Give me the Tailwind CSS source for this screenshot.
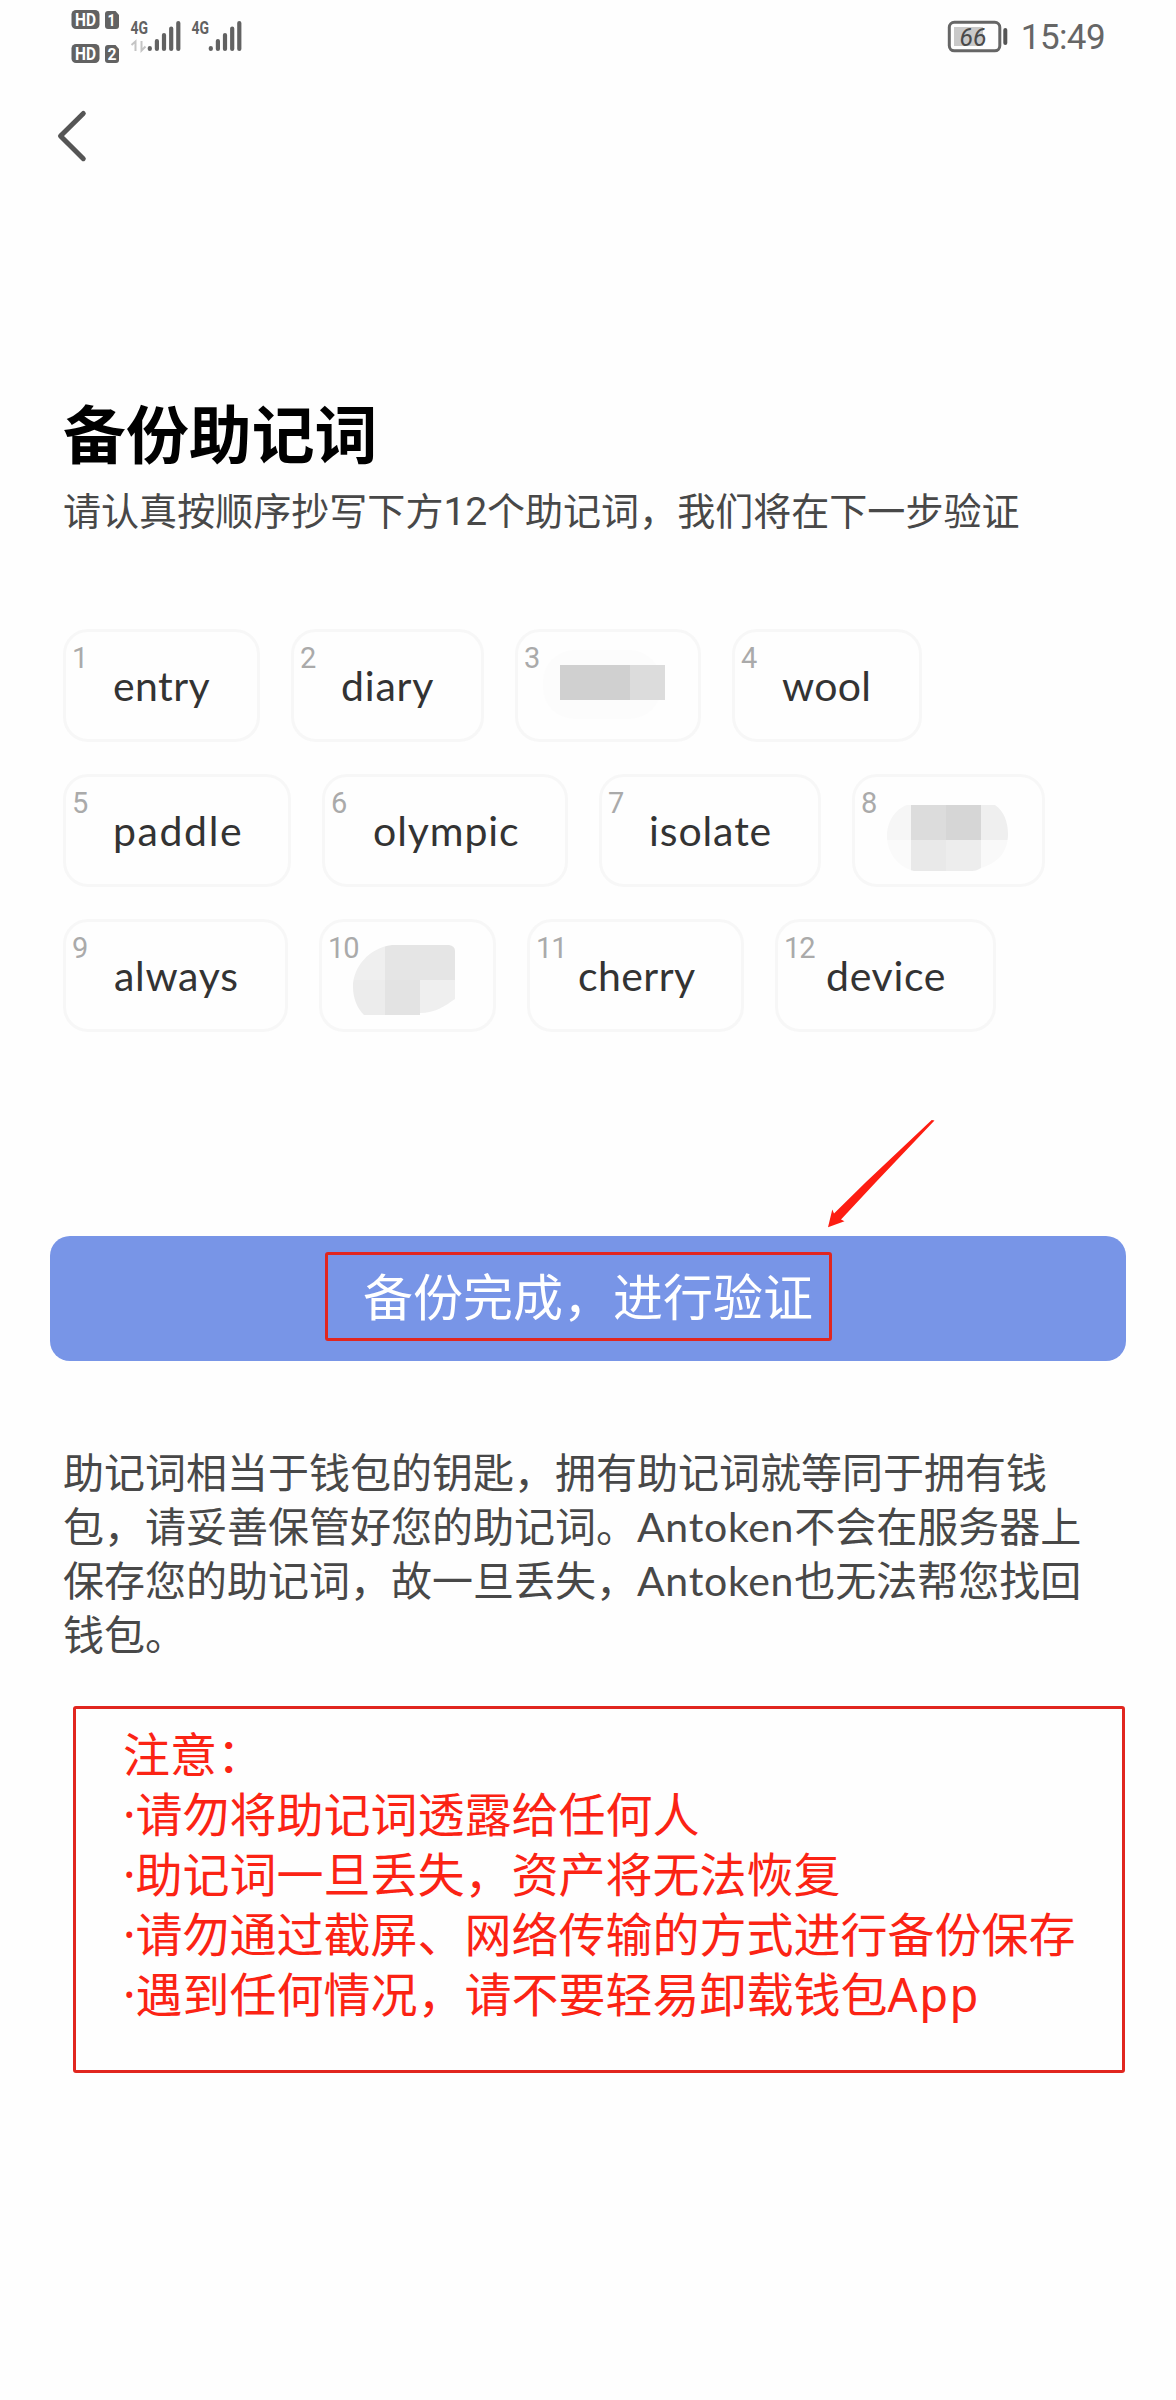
<!DOCTYPE html>
<html lang="zh-CN">
<head>
<meta charset="utf-8">
<title>备份助记词</title>
<script src="https://cdn.jsdelivr.net/npm/@tailwindcss/browser@4"></script>
</head>
<body class="bg-[#fefefe]">
<div class="relative flex h-[2400px] w-[1176px] flex-col overflow-hidden bg-[#fefefe] font-['Lato','Noto_Sans_CJK_SC',sans-serif] text-[#484848]">

  <!-- Status bar -->
  <header class="flex h-[72px] shrink-0 items-start justify-between pl-[71px] pr-[71px]">
    <svg class="mt-2" width="172" height="58" viewBox="71 8 172 58" fill="#626262" font-family="Roboto, sans-serif" font-weight="700">
      <rect x="71.500" y="10" width="28" height="19" rx="4.500"/>
      <rect x="71.500" y="44" width="28" height="19" rx="4.500"/>
      <path d="M108 11h7.500l3.500 4v11a3 3 0 0 1-3 3h-8a3 3 0 0 1-3-3V14a3 3 0 0 1 3-3z"/>
      <path d="M108 45h7.500l3.500 4v11a3 3 0 0 1-3 3h-8a3 3 0 0 1-3-3V48a3 3 0 0 1 3-3z"/>
      <g fill="#fff" font-size="18">
        <text x="75" y="26" textLength="21" lengthAdjust="spacingAndGlyphs">HD</text>
        <text x="75" y="60" textLength="21" lengthAdjust="spacingAndGlyphs">HD</text>
        <text x="107.500" y="26" font-size="17" textLength="8" lengthAdjust="spacingAndGlyphs">1</text>
        <text x="107.500" y="60" font-size="17" textLength="9" lengthAdjust="spacingAndGlyphs">2</text>
      </g>
      <g font-size="19">
        <text x="130.500" y="34" textLength="17.500" lengthAdjust="spacingAndGlyphs">4G</text>
        <text x="191.500" y="34" textLength="17.500" lengthAdjust="spacingAndGlyphs">4G</text>
      </g>
      <g fill="none" stroke="#c4c4c4" stroke-width="2">
        <path d="M131.500 45l4-3.500V51M141.500 41v9.500l4-4"/>
      </g>
      <g fill="none" stroke="#626262" stroke-width="4.200" stroke-linecap="round">
        <path d="M149.800 48v1M156.900 41v8M164 35v14M171.200 28.500v20.500M178.300 23v26"/>
        <path d="M210.800 48v1M217.900 41v8M225 35v14M232.200 28.500v20.500M239.300 23v26"/>
      </g>
    </svg>
    <div class="flex items-start gap-3 pt-5">
      <svg width="62" height="34" viewBox="948 20 62 34">
        <rect x="955" y="27" width="29" height="19" fill="#c9c9c9"/>
        <rect x="950.300" y="22.300" width="50.500" height="28.500" rx="5" fill="none" stroke="#666" stroke-width="3"/>
        <path d="M1006.300 30v13" stroke="#555" stroke-width="4" stroke-linecap="round"/>
        <text x="960.500" y="45.500" font-family="Roboto, sans-serif" font-size="25.500" font-style="italic" fill="#4a4a4a" textLength="27" lengthAdjust="spacingAndGlyphs">66</text>
      </svg>
      <span class="-mt-[4px] font-['Roboto'] text-[35px] leading-[44px] tracking-[-0.600px] text-[#666]">15:49</span>
    </div>
  </header>

  <!-- Back -->
  <nav class="flex h-[308px] shrink-0 pl-[56px] pt-[36px]">
    <svg width="32" height="56" viewBox="56 108 32 56" fill="none" stroke="#555" stroke-width="5" stroke-linecap="round" stroke-linejoin="round"><path d="M83.300 113.500L60.500 136l22.800 22.700"/></svg>
  </nav>

  <main class="flex flex-col">
    <h1 class="ml-[63px] mt-[13px] whitespace-nowrap text-[62.900px] font-bold leading-[82px] text-black">备份助记词</h1>
    <p class="ml-[63px] mt-[10px] whitespace-nowrap text-[38.050px] leading-[50px]">请认真按顺序抄写下方<span class="font-['Roboto'] text-[39px] tracking-[-0.200px]">12</span>个助记词，我们将在下一步验证</p>

    <!-- Mnemonic words -->
    <section class="ml-[63px] mt-[92px] flex flex-col gap-[32px] text-[41px] leading-[50px] text-[#333]">
      <div class="flex gap-[31px]">
        <div class="relative flex h-[113px] w-[197px] items-center rounded-[25px] border-3 border-[#f7f7f7] pl-[47px]"><i class="absolute left-[6px] top-[8px] font-['Roboto'] text-[29px] leading-[36px] not-italic text-[#aaa]">1</i><span class="tracking-[0.400px]">entry</span></div>
        <div class="relative flex h-[113px] w-[193px] items-center rounded-[25px] border-3 border-[#f7f7f7] pl-[47px]"><i class="absolute left-[6px] top-[8px] font-['Roboto'] text-[29px] leading-[36px] not-italic text-[#aaa]">2</i><span class="tracking-[0.800px]">diary</span></div>
        <div class="relative flex h-[113px] w-[186px] items-start rounded-[25px] border-3 border-[#f7f7f7] pl-[25px] pt-[18px]"><i class="absolute left-[6px] top-[8px] font-['Roboto'] text-[29px] leading-[36px] not-italic text-[#aaa]">3</i>
          <svg class="shrink-0" width="123" height="70" viewBox="543 650 123 70"><rect x="543" y="650" width="118" height="69" rx="32" fill="#fcfcfc"/><path fill="#d0d0d0" d="M560 665h70v35h-70z"/><path fill="#dcdcdc" d="M630 665h35v35h-35z"/></svg></div>
        <div class="relative flex h-[113px] w-[190px] items-center rounded-[25px] border-3 border-[#f7f7f7] pl-[47px]"><i class="absolute left-[6px] top-[8px] font-['Roboto'] text-[29px] leading-[36px] not-italic text-[#aaa]">4</i><span class="tracking-[0.300px]">wool</span></div>
      </div>
      <div class="flex gap-[31px]">
        <div class="relative flex h-[113px] w-[228px] items-center rounded-[25px] border-3 border-[#f7f7f7] pl-[47px]"><i class="absolute left-[6px] top-[8px] font-['Roboto'] text-[29px] leading-[36px] not-italic text-[#aaa]">5</i><span class="tracking-[1.600px]">paddle</span></div>
        <div class="relative flex h-[113px] w-[246px] items-center rounded-[25px] border-3 border-[#f7f7f7] pl-[48px]"><i class="absolute left-[6px] top-[8px] font-['Roboto'] text-[29px] leading-[36px] not-italic text-[#aaa]">6</i><span class="tracking-[0.900px]">olympic</span></div>
        <div class="relative flex h-[113px] w-[222px] items-center rounded-[25px] border-3 border-[#f7f7f7] pl-[47px]"><i class="absolute left-[6px] top-[8px] font-['Roboto'] text-[29px] leading-[36px] not-italic text-[#aaa]">7</i><span class="tracking-[0.900px]">isolate</span></div>
        <div class="relative flex h-[113px] w-[193px] items-start rounded-[25px] border-3 border-[#f7f7f7] pl-[32px] pt-[28px]"><i class="absolute left-[6px] top-[8px] font-['Roboto'] text-[29px] leading-[36px] not-italic text-[#aaa]">8</i>
          <svg width="121" height="66" viewBox="886 805 121 66"><defs><clipPath id="m8"><path d="M906 805h88c9 6 13 17 13 29 0 18-10 29-27 34-3 2-6 3-9 3h-58c-16-4-27-18-27-35 0-14 8-27 20-31z"/></clipPath></defs><g clip-path="url(#m8)"><path fill="#f6f6f6" d="M886 805h24v35h-24z"/><path fill="#dcdcdc" d="M910 805h36v35h-36z"/><path fill="#d6d6d6" d="M945 805h35v35h-35z"/><path fill="#efefef" d="M980 805h27v35h-27z"/><path fill="#fafafa" d="M886 840h24v31h-24z"/><path fill="#e9e9e9" d="M910 840h36v31h-36z"/><path fill="#ededed" d="M945 840h35v31h-35z"/><path fill="#f9f9f9" d="M980 840h27v31h-27z"/></g></svg></div>
      </div>
      <div class="flex gap-[31px]">
        <div class="relative flex h-[113px] w-[225px] items-center rounded-[25px] border-3 border-[#f7f7f7] pl-[48px]"><i class="absolute left-[6px] top-[8px] font-['Roboto'] text-[29px] leading-[36px] not-italic text-[#aaa]">9</i><span class="tracking-[0.700px]">always</span></div>
        <div class="relative flex h-[113px] w-[177px] items-start rounded-[25px] border-3 border-[#f7f7f7] pl-[31px] pt-[23px]"><i class="absolute left-[6px] top-[8px] font-['Roboto'] text-[29px] leading-[36px] tracking-[-1px] not-italic text-[#aaa]">10</i>
          <svg width="102" height="70" viewBox="353 945 102 70"><defs><clipPath id="m10"><path d="M392 945h57q6 1 6 6v48c-10 7-20 14-35 14v2h-56c-7-7-11-17-11-28 0-20 16-39 39-42z"/></clipPath></defs><g clip-path="url(#m10)"><path fill="#efefef" d="M353 945h32v35h-32z"/><path fill="#e5e5e5" d="M385 945h70v35h-70z"/><path fill="#ececec" d="M353 980h32v35h-32z"/><path fill="#e3e3e3" d="M385 980h35v35h-35z"/><path fill="#efefef" d="M420 980h35v35h-35z"/></g></svg></div>
        <div class="relative flex h-[113px] w-[217px] items-center rounded-[25px] border-3 border-[#f7f7f7] pl-[48px]"><i class="absolute left-[6px] top-[8px] font-['Roboto'] text-[29px] leading-[36px] tracking-[-1px] not-italic text-[#aaa]">11</i><span class="tracking-[0.400px]">cherry</span></div>
        <div class="relative flex h-[113px] w-[221px] items-center rounded-[25px] border-3 border-[#f7f7f7] pl-[48px]"><i class="absolute left-[6px] top-[8px] font-['Roboto'] text-[29px] leading-[36px] tracking-[-1px] not-italic text-[#aaa]">12</i><span class="tracking-[0.700px]">device</span></div>
      </div>
    </section>

    <!-- Primary action -->
    <button class="ml-[50px] mt-[204px] flex h-[125px] w-[1076px] items-start rounded-[20px] bg-[#7895e7] pl-[275px] pt-[16px]">
      <span class="flex h-[89px] w-[507px] items-center justify-center whitespace-nowrap rounded-[3px] border-3 border-[#e1261f] pl-[19px] text-[50px] leading-[60px] text-white">备份完成，进行验证</span>
    </button>

    <p class="ml-[63px] mt-[85px] whitespace-nowrap text-[41px] leading-[54px]">助记词相当于钱包的钥匙，拥有助记词就等同于拥有钱<br>包，请妥善保管好您的助记词。<span class="tracking-[0.700px]">Antoken</span>不会在服务器上<br>保存您的助记词，故一旦丢失，<span class="tracking-[0.700px]">Antoken</span>也无法帮您找回<br>钱包。</p>

    <aside class="ml-[73px] mt-[44px] h-[367px] w-[1052px] whitespace-nowrap rounded-[3px] border-3 border-[#e1261f] pl-[47px] pt-[15px] font-['Noto_Sans','Noto_Sans_CJK_SC',sans-serif] text-[47px] leading-[60px] text-[#fb2314]">
      <p>注意：</p>
      <p>·请勿将助记词透露给任何人</p>
      <p>·助记词一旦丢失，资产将无法恢复</p>
      <p>·请勿通过截屏、网络传输的方式进行备份保存</p>
      <p>·遇到任何情况，请不要轻易卸载钱包<span class="tracking-[1.500px]">App</span></p>
    </aside>
  </main>

  <!-- Pointer arrow laid over the page -->
  <svg class="absolute left-[820px] top-[1112px]" width="120" height="120" viewBox="820 1112 120 120" fill="#fd1d12"><path d="M931.700 1120L934.500 1120.500L876 1182L841 1219.500L844.500 1221.300L828 1227.300L832.300 1209.500L834 1213.500L866 1182z"/></svg>
</div>
</body>
</html>
